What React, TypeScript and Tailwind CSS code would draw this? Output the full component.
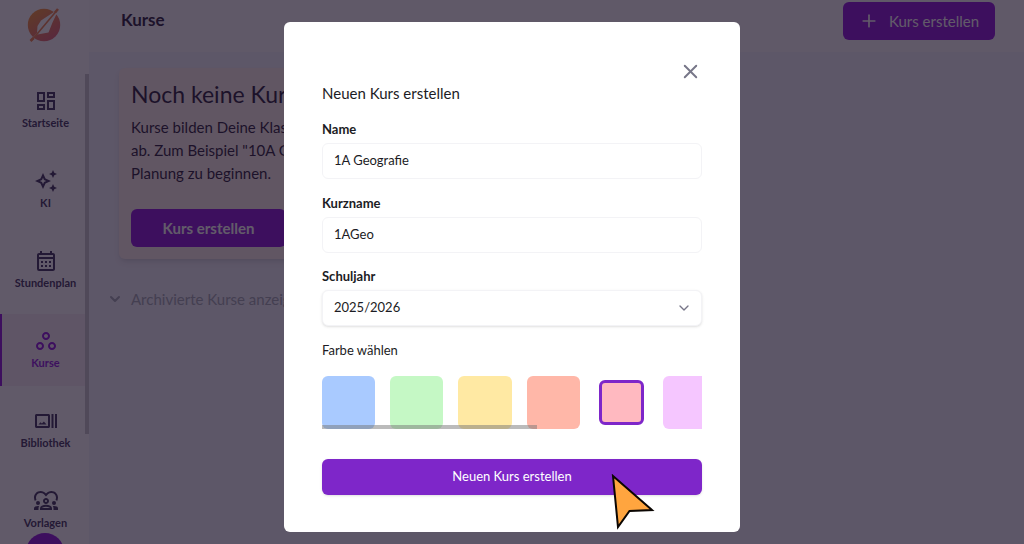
import React, { useState } from 'react';
import {
  MdOutlineAutoAwesome,
  MdOutlineCalendarMonth,
  MdOutlineDashboard,
  MdOutlineDiversity1,
  MdOutlineWorkspaces,
} from 'react-icons/md';
import { ChevronDown, Plus, X } from 'lucide-react';

const Logo: React.FC = () => (
  <svg viewBox="0 0 34 34" className="w-[34px] h-[34px]" aria-label="Logo">
    <defs>
      <linearGradient id="logo-gradient" x1="0" y1="0" x2="0.7" y2="1">
        <stop offset="0" stopColor="#f8961f" />
        <stop offset="1" stopColor="#e0586a" />
      </linearGradient>
    </defs>
    <circle cx="17" cy="17" r="16.2" fill="url(#logo-gradient)" />
    <path d="M30 2 L14 12.500 L10.500 18 L10 25 L4.500 31 L10.500 26.500 L21.500 24.500 L25.500 14.500 L30 5Z" fill="#fff" />
    <path d="M29 3.500 L5 32" stroke="#ee7a3d" strokeWidth="1.6" fill="none" />
    <path d="M31 1 L28 4.500 M3.500 33 L6.500 30" stroke="#ee7a3d" strokeWidth="2.6" fill="none" />
  </svg>
);

const LibraryIcon: React.FC<{ className?: string }> = ({ className }) => (
  <svg viewBox="0 0 24 24" fill="currentColor" className={className}>
    <path d="M21 5h2v14h-2zM17.500 5h2v14h-2zM14.500 5H2.500c-.8 0-1.500.7-1.500 1.500v11c0 .8.7 1.500 1.500 1.500h12c.8 0 1.500-.7 1.500-1.500v-11c0-.8-.7-1.500-1.500-1.500zM14 17H3V7h11v10z" />
    <path d="M4.500 15.500l2-2.200 1.400 1.300 2-2.200 2.600 3.100z" />
  </svg>
);

const navItems = [
  { label: 'Startseite', icon: MdOutlineDashboard },
  { label: 'KI', icon: MdOutlineAutoAwesome },
  { label: 'Stundenplan', icon: MdOutlineCalendarMonth },
  { label: 'Kurse', icon: MdOutlineWorkspaces, active: true },
  { label: 'Bibliothek', icon: LibraryIcon },
  { label: 'Vorlagen', icon: MdOutlineDiversity1 },
];

const colors = [
  { name: 'Blau', className: 'bg-[#a9caff]' },
  { name: 'Grün', className: 'bg-[#c5f8c5]' },
  { name: 'Gelb', className: 'bg-[#ffe9a3]' },
  { name: 'Koralle', className: 'bg-[#ffb7a8]' },
  { name: 'Rosa', className: 'bg-[#ffb9c0]' },
  { name: 'Flieder', className: 'bg-[#f5c6ff]' },
  { name: 'Türkis', className: 'bg-[#b5f2ee]' },
  { name: 'Grau', className: 'bg-[#d9dce3]' },
];

const Sidebar: React.FC = () => (
  <aside className="relative w-[89px] shrink-0 bg-[#fcfcfe] overflow-hidden">
    <a href="#start" className="flex justify-center pt-2 pb-8 pr-[2px]">
      <Logo />
    </a>
    <div className="relative">
      <nav className="flex flex-col gap-2">
        {navItems.map(({ label, icon: ItemIcon, active }) => (
          <a
            key={label}
            href={`#${label}`}
            className={`flex flex-col items-center justify-center gap-[2px] h-[72px] text-[11px] leading-4 font-bold border-l-2 ${
              active ? 'border-purple-700 bg-[#f3e9f6] text-purple-700' : 'border-transparent text-[#2d2350]'
            }`}
          >
            <ItemIcon className="w-6 h-6" />
            {label}
          </a>
        ))}
      </nav>
      <div className="absolute right-0 top-0 w-1 h-[360px] bg-[#c2c2c8]" />
    </div>
    <div className="absolute left-[26px] -bottom-[27px] w-[38px] h-[38px] rounded-full bg-purple-700" />
  </aside>
);

const CoursesPage: React.FC = () => (
  <div className="grow flex flex-col bg-[#eef0fa]">
    <header className="flex items-start justify-between h-[52px] pl-8 pr-[29px] bg-[#f8f8fc]">
      <h1 className="pt-2 text-[17px] leading-6 font-bold text-[#150a2c]">Kurse</h1>
      <button className="flex items-center justify-center gap-[10px] mt-[2px] w-[152px] h-[38px] rounded-md bg-purple-700 text-white text-[15px]">
        <Plus className="w-5 h-5" strokeWidth={2} />
        Kurs erstellen
      </button>
    </header>
    <main className="p-4 pl-[30px]">
      <section className="max-w-[560px] rounded-md bg-[#fbeeea] shadow-md px-3 pt-3 pb-3">
        <h2 className="text-[23px] leading-7 text-[#150a2c]">Noch keine Kurse vorhanden</h2>
        <p className="mt-2 mb-6 text-[15px] leading-[23px] text-[#150a2c]">
          Kurse bilden Deine Klassen und Lerngruppen<br />
          ab. Zum Beispiel "10A Geografie", um mit der<br />
          Planung zu beginnen.
        </p>
        <button className="w-[155px] h-[38px] rounded-md bg-purple-700 text-white text-[15px] font-bold">Kurs erstellen</button>
      </section>
      <button className="flex items-center gap-2 mt-7 -ml-3 text-[15px] leading-6 text-gray-400">
        <ChevronDown className="w-4 h-4" strokeWidth={3} />
        Archivierte Kurse anzeigen
      </button>
    </main>
  </div>
);

const CourseDialog: React.FC = () => {
  const [name, setName] = useState('1A Geografie');
  const [shortName, setShortName] = useState('1AGeo');
  const [year, setYear] = useState('2025/2026');
  const [color, setColor] = useState('Rosa');

  return (
    <div role="dialog" aria-labelledby="dialog-title" className="relative w-full max-w-[456px] rounded-md bg-white px-[38px] pt-[38px] pb-[37px] text-[#1c1c24]">
      <div className="flex justify-end">
        <button aria-label="Schließen" className="text-[#777688]">
          <X className="w-[23px] h-[23px]" strokeWidth={2} />
        </button>
      </div>
      <h2 id="dialog-title" className="text-[15px] leading-5">Neuen Kurs erstellen</h2>

      <label htmlFor="name" className="block mt-4 mb-1 text-[13px] leading-5 font-bold">Name</label>
      <input
        id="name"
        value={name}
        onChange={(e) => setName(e.target.value)}
        className="block w-full h-9 px-[11px] pb-[2px] text-[13px] border border-[#f3f3f6] rounded-md outline-none"
      />

      <label htmlFor="short-name" className="block mt-[14px] mb-1 text-[13px] leading-5 font-bold">Kurzname</label>
      <input
        id="short-name"
        value={shortName}
        onChange={(e) => setShortName(e.target.value)}
        className="block w-full h-9 px-[11px] pb-[2px] text-[13px] border border-[#f3f3f6] rounded-md outline-none"
      />

      <label htmlFor="year" className="block mt-[13px] mb-1 text-[13px] leading-5 font-bold">Schuljahr</label>
      <div className="relative">
        <select
          id="year"
          value={year}
          onChange={(e) => setYear(e.target.value)}
          className="block w-full h-9 px-[11px] text-[13px] appearance-none bg-white border border-[#f3f3f6] rounded-md shadow-sm outline-none"
        >
          <option>2025/2026</option>
          <option>2026/2027</option>
        </select>
        <ChevronDown className="absolute right-[10px] top-[10px] w-4 h-4 text-[#777688] pointer-events-none" strokeWidth={2} />
      </div>

      <fieldset className="min-w-0">
        <legend className="pt-[14px] text-[13px] leading-5">Farbe wählen</legend>
        <div className="relative mt-4">
          <div className="grid grid-flow-col auto-cols-[14%] gap-[15px] overflow-hidden">
            {colors.map((c) => (
              <label key={c.name} className={`flex aspect-square ${color === c.name ? 'p-1' : ''}`}>
                <input
                  type="radio"
                  name="color"
                  aria-label={c.name}
                  checked={color === c.name}
                  onChange={() => setColor(c.name)}
                  className={`grow appearance-none rounded-md ${c.className} ${color === c.name ? 'border-3 border-[#7e26c9]' : ''}`}
                />
              </label>
            ))}
          </div>
          <div className="absolute left-0 bottom-0 w-[215px] h-1 bg-[#777]/50" />
        </div>
      </fieldset>

      <button className="block w-full h-9 mt-[30px] rounded-md bg-[#7e26c9] text-white text-[13px] shadow-sm">Neuen Kurs erstellen</button>

      <svg viewBox="0 0 44 56" className="absolute right-[85px] bottom-[2px] w-[44px] h-[56px]" fill="none">
        <path d="M2 2 L41 36 L18.500 37 L7 53 Z" fill="#ffa53f" stroke="#0b0602" strokeWidth="2" strokeLinejoin="miter" />
      </svg>
    </div>
  );
};

const App: React.FC = () => {
  return (
    <div className="relative flex h-screen overflow-hidden font-['Lato',sans-serif]">
      <Sidebar />
      <CoursesPage />
      {/* Overlay */}
      <div className="fixed inset-0 flex items-start justify-center pt-[22px] bg-[#20162a]/70">
        <CourseDialog />
      </div>
    </div>
  );
};

export default App;
